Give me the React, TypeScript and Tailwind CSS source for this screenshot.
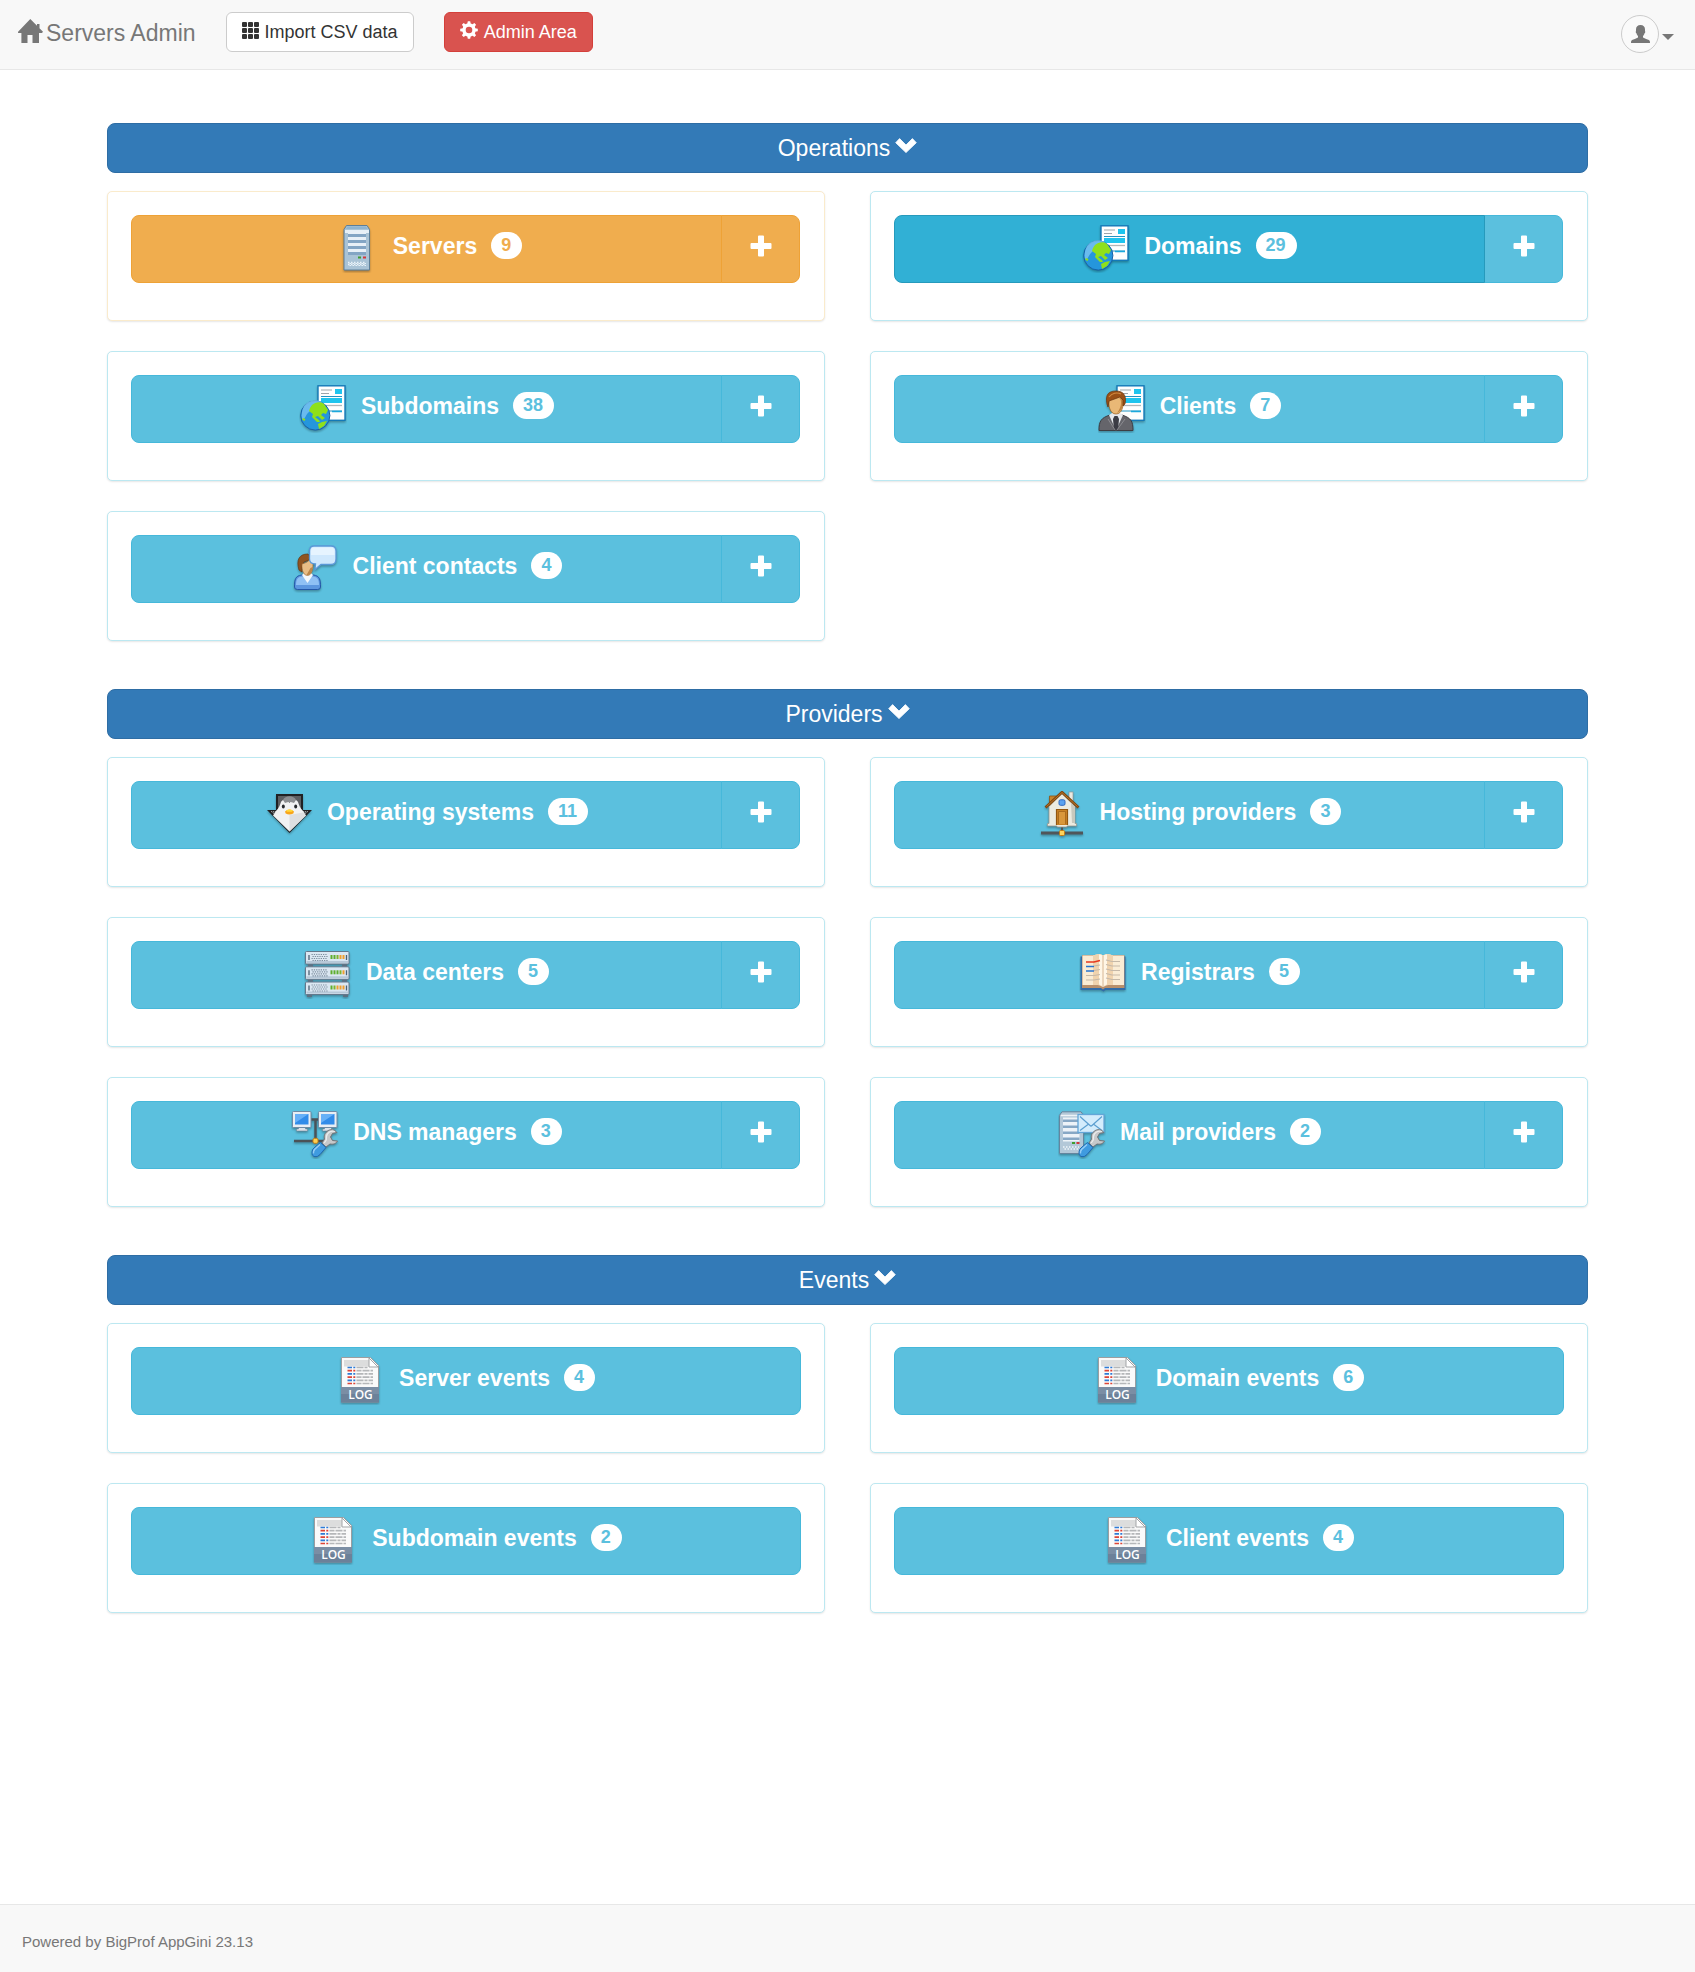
import React from "react";

type IconProps = { className?: string };

const tile = "size-12 shrink-0";

function Shadowed({ children }: { children: React.ReactNode }) {
  return (
    <svg viewBox="0 0 48 48" className={tile} aria-hidden="true">
      <g opacity="0.3" transform="translate(0 1.5)" style={{ filter: "brightness(0) blur(0.8px)" }}>
        {children}
      </g>
      {children}
    </svg>
  );
}

function HomeIcon() {
  return (
    <svg viewBox="0 0 25 24" className="h-6 w-[25px]" fill="currentColor" aria-hidden="true">
      <path d="M12.3 0 19 6.8V5h2.5v4.3L25 12.8 24 14h-3v10h-6.5v-8h-5v8H3.4V14H0l.1-1.3z" />
    </svg>
  );
}

function GridIcon() {
  const cells = [0, 6, 12];
  return (
    <svg viewBox="0 0 17 17" className="mb-1 size-[17px]" fill="currentColor" aria-hidden="true">
      {cells.map((y) => cells.map((x) => <rect key={`${x}-${y}`} x={x} y={y} width="5" height="5" rx="1" />))}
    </svg>
  );
}

function CogIcon() {
  const teeth = [0, 45, 90, 135, 180, 225, 270, 315];
  return (
    <svg viewBox="0 0 18 18" className="mb-1 size-[18px]" aria-hidden="true">
      <circle cx="9" cy="9" r="5" fill="none" stroke="currentColor" strokeWidth="3.4" />
      {teeth.map((a) => (
        <path key={a} d="M7.2 3.2 7.8.2h2.4l.6 3z" fill="currentColor" transform={`rotate(${a} 9 9)`} />
      ))}
    </svg>
  );
}

function UserIcon() {
  return (
    <svg viewBox="0 0 19 18" className="h-[18px] w-[19px]" fill="currentColor" aria-hidden="true">
      <path d="M9.5 0C12.3 0 14 1.6 14 4.3c0 .8-.1 1.3.1 1.9.3.8.1 1.6-.6 2.1-.3 1.4-.8 2-1.5 2.6v1.5c2 1.2 4.3 1.6 5.900 2.600.8.5 1.100 1.200 1.100 3H0c0-1.800.3-2.500 1.100-3 1.600-1 3.900-1.400 5.900-2.600v-1.500c-.7-.6-1.200-1.200-1.500-2.600-.7-.5-.9-1.300-.6-2.100.2-.6.1-1.100.1-1.900C5 1.600 6.700 0 9.500 0z" />
    </svg>
  );
}

function ChevronDown() {
  return (
    <svg viewBox="0 0 22 15" className="mb-[6px] h-[15px] w-[22px]" fill="currentColor" aria-hidden="true">
      <path d="M11 14.600.700 4.700 4.600.600 11 7 17.400.600 21.300 4.700z" stroke="currentColor" strokeWidth=".8" strokeLinejoin="round" />
    </svg>
  );
}

function PlusIcon() {
  return (
    <svg viewBox="0 0 22 22" className="size-[22px]" fill="currentColor" aria-hidden="true">
      <path d="M9 .500h4q1 0 1 1V8h6.500q1 0 1 1v4q0 1-1 1H14v6.500q0 1-1 1H9q-1 0-1-1V14H1.500q-1 0-1-1V9q0-1 1-1H8V1.500q0-1 1-1z" />
    </svg>
  );
}

function ServerIcon() {
  return (
    <Shadowed>
      <path d="M15.500.500h20.500l2.500 4V45H13V4.500z" fill="#a9c3d6" stroke="#5d7f99" />
      <path d="M16.500 1.500h18.500l1.500 2.500H15z" fill="#8fb4d0" />
      <path d="M14 5h24v3H14z" fill="#e6f0f7" />
      <rect x="17" y="6" width="18" height="24" fill="#e8f0f7" />
      {[9, 15, 21, 27].map((y) => (
        <rect key={y} x="17" y={y} width="18" height="3" fill="#83a5c4" />
      ))}
      <rect x="27" y="31.500" width="3" height="2" fill="#3f9e2f" />
      <rect x="32" y="31.500" width="3" height="2" fill="#d4373a" />
      <path d="M17 37.500h18M17 39.500h18" stroke="#e9f2f8" strokeWidth="1.300" strokeDasharray="1.500 1.500" />
      <path d="M18.500 38.500h17M18.500 40.500h17" stroke="#e9f2f8" strokeWidth="1" strokeDasharray="1.500 1.500" />
    </Shadowed>
  );
}

function DocumentSheet() {
  return (
    <g>
      <rect x="19" y=".8" width="27" height="34.500" fill="#fdfefe" stroke="#1379b8" strokeWidth="1.400" />
      <path d="M22 5h11M22 8.500h8" stroke="#9da5aa" strokeWidth="1.200" />
      <rect x="36" y="4" width="7" height="5" fill="#1ec4ee" />
      <rect x="22" y="13" width="21" height="5" fill="#1ec4ee" />
      <path d="M22 11.500h21M22 26h21" stroke="#2396c4" />
      <path d="M22 20.500h21" stroke="#b2b6b8" strokeWidth="1.300" />
      <path d="M33 26.500h10" stroke="#1ba8dc" strokeWidth="1.500" />
    </g>
  );
}

function GlobeIcon() {
  return (
    <Shadowed>
      <DocumentSheet />
      <circle cx="16.300" cy="30.500" r="14.600" fill="#2596dc" stroke="#1762a8" />
      <path d="M5 21c5-7 15-8 21-1-7 5-12 1-16 7-4 3-4 9-7 7-1-4 0-9 2-13z" fill="#7cc4f2" opacity=".8" />
      <path d="M13 20c3-3 9-4 12-1l4 6-2 4-3-1-2 2 4 3-3 2-4-4-3 1 4 3 1 2-3 0-5-5 1-3-4-3 1-3z" fill="#8fe01b" />
      <path d="M19 39l4-2 5-1-3 5-5 3zM3.500 33l3 1-1 2-2-1z" fill="#8fe01b" />
    </Shadowed>
  );
}

function ClientIcon() {
  return (
    <Shadowed>
      <DocumentSheet />
      <path d="M1 45.500C1 36 3 33 12 30h12c9 3 11 6 11 15.500z" fill="#65656b" stroke="#3d3e44" />
      <path d="M11 30l7 15.500L25 30l-3-2h-8z" fill="#e6e9ed" />
      <path d="M16.500 31h3l1.500 3-1 11h-4l-1-11z" fill="#3b3c45" />
      <path d="M10 34l7 11M27 34l-8 11" stroke="#8b8b91" />
      <path d="M11 13c4-4 10-4 14 0 1 8-1 16-7 16s-8-8-7-16z" fill="#e9b876" stroke="#9a5e20" strokeWidth=".7" />
      <path d="M21 13c3 1 3 9-2 15 6-2 7-10 6-15z" fill="#bf8441" />
      <path d="M9 19C7 9 11 6 18 6s11 4 9 13l-2 2V15l-3-3-11 4-1 6z" fill="#9a4f15" stroke="#6a330b" strokeWidth=".7" />
      <path d="M11 12c3-4 8-5 12-3" stroke="#d18b42" strokeWidth="1.200" fill="none" />
    </Shadowed>
  );
}

function ContactIcon() {
  return (
    <Shadowed>
      <path d="M3.500 42c0-8 1-11 7-12h12c6 1 7 4 7 12q0 2.500-3 2.500h-20q-3 0-3-2.500z" fill="#5c96df" stroke="#2457a8" />
      <path d="M5 40c0-6 2-8 6-8.500h11c4 .5 6 2.500 6 8.500z" fill="#8fc0f4" />
      <path d="M11 30l5.500 8L22 30l-2-2h-7z" fill="#f4f8fc" />
      <path d="M8 25C5 15 8 9 17 9l4 5-8 3-2 4v6z" fill="#8f5421" stroke="#653710" strokeWidth=".7" />
      <path d="M11 19c4-1 7-3 8-5l3 5c0 7-2 11.500-5.500 11.500S10.500 26 11 19z" fill="#e8bd86" stroke="#94602c" strokeWidth=".6" />
      <path d="M17 30c3 0 4.500-4 4.500-8l-2 1-4 7z" fill="#bd8648" />
      <path d="M23 1h17q5 0 5 5v8q0 5.500-5 5.500H30l-6 5 .500-5.500q-6 0-6-5V6q0-5 4.500-5z" fill="#cfe8fd" stroke="#5a98d8" strokeWidth="1.300" />
      <path d="M23 2.500h17q3.500 0 3.500 4V10H20V6q0-3.500 3-3.500z" fill="#e6f4ff" />
    </Shadowed>
  );
}

function PenguinIcon() {
  return (
    <Shadowed>
      <path d="M11 3h27v16h9L24.500 42 2 19h9z" fill="#202123" />
      <path d="M13 5h23v15H13z" fill="#5c5e61" />
      <path d="M6 20.500h7l2 7zM43 20.500h-7l-2 7z" fill="#55575a" stroke="#b8babb" strokeWidth=".7" strokeDasharray="1 1" />
      <path d="M16 11c-1 3-2 6-5 9l-3 4.500L24.500 40.500 41 24.500 38 20c-3-3-4-6-5-9-2-3-6-3-8.500 1C22 8 18 8 16 11z" fill="#f1f2f3" />
      <path d="M24.500 24v16.500L41 24.500l-3-3z" fill="#d5d7d9" opacity=".7" />
      <path d="M18 9c2-5 11-5 13 0l-2 3q-4.500-2-9 0z" fill="#8c8e91" />
      <ellipse cx="18.300" cy="15.500" rx="1.500" ry="2" fill="#25282b" />
      <ellipse cx="30.700" cy="15.500" rx="1.500" ry="2" fill="#25282b" />
      <path d="M20 20.500q4.500-4 9 0l-.7 2q-4 2-7.600 0z" fill="#f9a51a" />
      <path d="M21 19.500q3.500-2 7 0l-1 1.200h-5z" fill="#ffd83a" />
    </Shadowed>
  );
}

function RackIcon() {
  const units = [
    { y: 0.5, lights: ["#5fae2d", "#5fae2d", "#7fb52d", "#f0a030", "#f0a030"] },
    { y: 15.8, lights: ["#5fae2d", "#5fae2d", "#5fae2d", "#7fb52d", "#f0a030"] },
    { y: 31, lights: ["#5fae2d", "#7fb52d", "#f0a030", "#f0a030", "#f0a030"] },
  ];
  return (
    <Shadowed>
      <path d="M4 12h5v4H4zM38 12h5v4h-5zM4 27h5v5H4zM38 27h5v5h-5zM3 42h5v4H3zM39 42h5v4h-5z" fill="#5b7183" />
      {units.map(({ y, lights }) => (
        <g key={y}>
          <rect x="1.500" y={y} width="43.500" height="12.500" rx="1" fill="#dbe7f2" stroke="#63788c" />
          <path d={`M2.500 ${y + 10.5}h41.500`} stroke="#b7c8d8" strokeWidth="2" />
          <path d={`M5 ${y + 3.500}v5M42.500 ${y + 3.500}v5`} stroke="#4c6275" strokeWidth="1.300" />
          {[0, 2, 4, 6].map((d) => (
            <path key={d} d={`M${7.500 + (d % 4) / 2} ${y + 3 + d}h16`} stroke="#7e8f9f" strokeWidth="1.200" strokeDasharray="1.300 1" />
          ))}
          {lights.map((c, i) => (
            <rect key={i} x={26.500 + i * 3} y={y + 3.500} width="2" height="4" fill={c} />
          ))}
        </g>
      ))}
    </Shadowed>
  );
}

function Wrench() {
  return (
    <g>
      <path d="M46 21.500c-2-3-7-4-10-1-3 2.500-3 5-2.500 7.500l-2.500 4 4 4 4-3c3 .500 6 0 7.500-3l-5-.5-2-3.500 2-3.500z" fill="#c6c8ca" stroke="#717477" strokeLinejoin="round" />
      <path d="M44 20.500c-4-1.500-8 1-8.500 5l-.3 3.500-2 3" fill="none" stroke="#eceded" strokeWidth="1.300" />
      <path d="M29.500 31.500l5.500 5-6 7q-2.500 3-6 2-2.500-1-2-4.500 0-3 3-5z" fill="#3f9be0" stroke="#1f6bb3" strokeLinejoin="round" />
      <path d="M29 33.500l-5.500 5q-1.500 2-1 4" fill="none" stroke="#95cdf5" strokeWidth="1.500" />
    </g>
  );
}

function DnsIcon() {
  return (
    <Shadowed>
      <path d="M20 8.500h7M24.500 8.500V29M3 30h31" stroke="#4b5257" strokeWidth="2.400" />
      {[1.5, 27.500].map((x) => (
        <g key={x}>
          <path d={`M${x + 6} 16h7v2h2v2H${x + 4}v-2h2z`} fill="#dce3ea" stroke="#6e8497" strokeWidth=".6" />
          <rect x={x} y=".5" width="18.500" height="16" rx="1" fill="#e8eef4" stroke="#6e8ba5" />
          <rect x={x + 2.500} y="3" width="13.500" height="10.500" fill="#318ce9" />
          <path d={`M${x + 2.500} 3h13.500l-13.500 9z`} fill="#66b0f7" />
        </g>
      ))}
      <rect x="22" y="27.300" width="5" height="5" rx="1.500" fill="#ffd052" stroke="#c37c14" />
      <Wrench />
    </Shadowed>
  );
}

function HouseIcon() {
  return (
    <Shadowed>
      <path d="M3 42h42" stroke="#50565a" strokeWidth="3" />
      <path d="M24 35v6" stroke="#50565a" strokeWidth="2" />
      <rect x="31" y="1" width="4" height="13" fill="#e9e9e2" stroke="#989a95" strokeWidth=".7" />
      <path d="M11.500 5h7l3 4-10 8z" fill="#c8842a" stroke="#8b5413" strokeWidth=".8" />
      <path d="M11 15.500 24 2.500l13 13v17h1.500V35H29v1H19v-1H9.500v-2.500H11z" fill="#ecebe0" stroke="#999a92" strokeWidth=".8" />
      <path d="M33 12l4 4v16h-3z" fill="#c9c9bd" />
      <path d="M7.500 16.500 24 1.300l16.500 15.200" fill="none" stroke="#80470f" strokeWidth="2.800" />
      <path d="M8.500 15.500 24 1.500l15.500 14" fill="none" stroke="#b9772a" strokeWidth="1" />
      <rect x="21" y="8.800" width="6" height="5.500" rx="1.500" fill="#5ba3f0" stroke="#2f68c0" />
      <path d="M18.500 34V18.500h11V34" fill="#c98226" stroke="#92560f" strokeWidth="1.200" />
      <path d="M20.500 33V20.500h7V33" fill="#d9973b" stroke="#a2641a" strokeWidth=".8" />
      <rect x="21.500" y="39.500" width="5" height="5" rx="1" fill="#ffd35c" stroke="#c37c14" />
    </Shadowed>
  );
}

function BookIcon() {
  return (
    <Shadowed>
      <path d="M1.500 5.500h45V39h-20l-2 1.500-2.500-1.500H1.500z" fill="#316ca8" />
      <path d="M3 4l19 0 2 2 2-2h19.500v33H26l-2 1.500-2-1.500H3z" fill="#b9906c" />
      <path d="M3.500 4.500H14q7-3 10 0 4-3 10 0h11v29.500H34q-6-1-10 2-4-3-10-2H3.500z" fill="#faecd5" />
      <path d="M14 4.500q7-3 10 0V36q-4-3-10-2zM34 4.500q-6-3-10 0V36q4-3 10-2z" fill="#f0d3ae" />
      <path d="M20 3.500q2.500-.5 4 2 1.500-2.500 4-2v30q-2.500.5-4 2.500-1.500-2-4-2.500z" fill="#fff6e6" />
      <path d="M24 5v31" stroke="#cda77d" strokeWidth=".8" />
      <path d="M7 11h8l6-1.500" fill="none" stroke="#e6391f" strokeWidth="1.600" />
      <path d="M7 15.500h8M7 20h8" stroke="#2874cf" strokeWidth="1.600" />
      <path d="M15 15l6-1M15 19.500l6-1M7 24.500h8l6-1M7 29h8l6-1M27 9l6 1.500h8M27 13.500l6 1.500h8M27 18l6 1.500h8M27 22.500l6 1.500h8M27 27l6 1.500h8" fill="none" stroke="#c5b8a8" strokeWidth="1.200" />
    </Shadowed>
  );
}

function MailIcon() {
  return (
    <Shadowed>
      <path d="M4 .8h19l2.500 3.500v38.200h-24V4.300z" fill="#b3c8d8" stroke="#65859e" />
      <path d="M3 4.500h21" stroke="#edf3f7" strokeWidth="1.500" />
      <rect x="5" y="6.500" width="16.500" height="24" fill="#edf3f8" />
      {[8.500, 14.500, 20.500, 26.500].map((y) => (
        <rect key={y} x="5" y={y} width="16.500" height="2.500" fill="#87a8c5" />
      ))}
      <rect x="14" y="31" width="3" height="2" fill="#3f9e2f" />
      <rect x="18.500" y="31" width="3" height="2" fill="#d4373a" />
      <path d="M5 36h16M6.500 38h15" stroke="#f0f5f9" strokeWidth="1.400" strokeDasharray="1.500 1.500" />
      <rect x="20" y="3.500" width="26" height="18" fill="#d3ecfc" stroke="#63a6d8" strokeWidth="1.300" />
      <path d="M22 5.500l10 9q1 1 2 0l10-9M22 19.500l8-6M44 19.500l-8-6" fill="none" stroke="#5c9fd0" strokeWidth="1.200" />
      <Wrench />
    </Shadowed>
  );
}

function LogIcon() {
  const rows = [10.500, 13.700, 16.900, 20.100, 23.300, 26.500];
  return (
    <Shadowed>
      <path d="M4.500.500h29l8 8V45h-37z" fill="#fafafa" stroke="#9c9ea0" />
      <path d="M7 3h25v6.500H7z" fill="#dcdddd" />
      <path d="M32 1l9 9h-9z" fill="#fff" stroke="#a3a5a7" strokeLinejoin="round" />
      {rows.map((y, i) => (
        <g key={y} strokeWidth="1.700">
          <path d={`M10.500 ${y}h4.500m1.300 0h2`} stroke={i % 2 ? "#dd4437" : "#2e7bd6"} />
          <path d={`M19.500 ${y}h${i === 0 ? 11 : 16.500}`} stroke="#b5b7b9" strokeDasharray={i % 2 ? "5 1 7 1" : "7 1 3 1"} />
        </g>
      ))}
      <path d="M4 30h38v15.500H4z" fill="#6c8199" />
      <path d="M4 30h38v7H4z" fill="#7b8ea4" />
      <text x="23.500" y="42" textAnchor="middle" fontFamily="'Open Sans', sans-serif" fontSize="12" fontWeight="600" fill="#fff">
        LOG
      </text>
    </Shadowed>
  );
}

type Item = {
  label: string;
  count: number;
  Icon: React.ComponentType<IconProps>;
  tone?: "warning" | "active";
};

type Group = { title: string; canAdd: boolean; items: Item[] };

const groups: Group[] = [
  {
    title: "Operations",
    canAdd: true,
    items: [
      { label: "Servers", count: 9, Icon: ServerIcon, tone: "warning" },
      { label: "Domains", count: 29, Icon: GlobeIcon, tone: "active" },
      { label: "Subdomains", count: 38, Icon: GlobeIcon },
      { label: "Clients", count: 7, Icon: ClientIcon },
      { label: "Client contacts", count: 4, Icon: ContactIcon },
    ],
  },
  {
    title: "Providers",
    canAdd: true,
    items: [
      { label: "Operating systems", count: 11, Icon: PenguinIcon },
      { label: "Hosting providers", count: 3, Icon: HouseIcon },
      { label: "Data centers", count: 5, Icon: RackIcon },
      { label: "Registrars", count: 5, Icon: BookIcon },
      { label: "DNS managers", count: 3, Icon: DnsIcon },
      { label: "Mail providers", count: 2, Icon: MailIcon },
    ],
  },
  {
    title: "Events",
    canAdd: false,
    items: [
      { label: "Server events", count: 4, Icon: LogIcon },
      { label: "Domain events", count: 6, Icon: LogIcon },
      { label: "Subdomain events", count: 2, Icon: LogIcon },
      { label: "Client events", count: 4, Icon: LogIcon },
    ],
  },
];

const infoTone = "border-[#46b8da] bg-[#5bc0de]";
const warningTone = "border-[#eea236] bg-[#f0ad4e]";
const activeTone = "z-10 border-[#269abc] bg-[#31b0d5]";

function TableCard({ item, canAdd }: { item: Item; canAdd: boolean }) {
  const { label, count, Icon, tone } = item;
  const warning = tone === "warning";
  const mainTone = warning ? warningTone : tone === "active" ? activeTone : infoTone;
  return (
    <div
      className={`rounded-[5px] border bg-white px-[23px] pt-[23px] pb-[37px] shadow-[0_1px_2px_rgba(0,0,0,0.1)] ${
        warning ? "border-[#faebcc]" : "border-[#bce8f1]"
      }`}
    >
      <div className={`flex ${canAdd ? "mr-px" : ""}`}>
        <a
          href="#"
          className={`relative flex h-[68px] flex-1 items-center justify-center gap-[14px] border text-white ${mainTone} ${
            canAdd ? "rounded-l-lg" : "rounded-lg"
          }`}
        >
          <Icon />
          <span className="flex items-center gap-[14px] pb-[7px] text-[23px] leading-[30px] font-bold">
            {label}
            <span
              className={`rounded-full bg-white pr-[11px] pl-[10px] text-[18px] leading-[27px] ${
                warning ? "text-[#f0ad4e]" : "text-[#5bc0de]"
              }`}
            >
              {count}
            </span>
          </span>
        </a>
        {canAdd && (
          <button
            type="button"
            aria-label={`Add to ${label}`}
            className={`-ml-px flex h-[68px] w-[79px] items-center justify-center rounded-r-lg border pb-[7px] text-white ${
              warning ? warningTone : infoTone
            }`}
          >
            <PlusIcon />
          </button>
        )}
      </div>
    </div>
  );
}

export default function App() {
  return (
    <div className="flex min-h-screen flex-col bg-white font-['Liberation_Sans',Arial,sans-serif] text-[#333]">
      <nav className="flex h-[70px] items-start border-b border-[#e7e7e7] bg-[#f8f8f8] pt-3 pr-[21px] pl-[18px]">
        <a href="#" className="flex items-center gap-[3px] text-[23px] leading-[42px] text-[#777]">
          <span className="pb-1">
            <HomeIcon />
          </span>
          Servers Admin
        </a>
        <button
          type="button"
          className="ml-[30px] flex h-10 items-center gap-[6px] rounded-md border border-[#ccc] bg-white px-[15px] text-[18px] leading-6"
        >
          <GridIcon />
          Import CSV data
        </button>
        <button
          type="button"
          className="ml-[30px] flex h-10 items-center gap-[6px] rounded-md border border-[#d43f3a] bg-[#d9534f] px-[15px] text-[18px] leading-6 text-white"
        >
          <CogIcon />
          Admin Area
        </button>
        <button type="button" aria-label="User menu" className="mt-[3px] ml-auto flex items-center gap-[3px] text-[#777]">
          <span className="flex size-[38px] items-center justify-center rounded-full border border-[#ccc] bg-[#fafafa]">
            <UserIcon />
          </span>
          <svg viewBox="0 0 12 6" className="mt-[6px] h-[6px] w-3" fill="currentColor" aria-hidden="true">
            <path d="M0 0h12L6 6z" />
          </svg>
        </button>
      </nav>

      <main className="flex flex-col gap-12 px-[107px] pt-[53px] pb-12">
        {groups.map((group) => (
          <section key={group.title}>
            <button
              type="button"
              className="flex h-[50px] w-full items-center justify-center gap-[5px] rounded-lg border border-[#2e6da4] bg-[#337ab7] text-[23px] leading-[30px] text-white"
            >
              {group.title}
              <ChevronDown />
            </button>
            <div className="mt-[18px] grid grid-cols-2 gap-x-[45px] gap-y-[30px]">
              {group.items.map((item) => (
                <TableCard key={item.label} item={item} canAdd={group.canAdd} />
              ))}
            </div>
          </section>
        ))}
      </main>

      <footer className="mt-auto flex h-[68px] items-center border-t border-[#e7e7e7] bg-[#f8f8f8] px-[22px] pt-[6px] text-[15px] leading-5 text-[#777]">
        Powered by BigProf AppGini 23.13
      </footer>
    </div>
  );
}
